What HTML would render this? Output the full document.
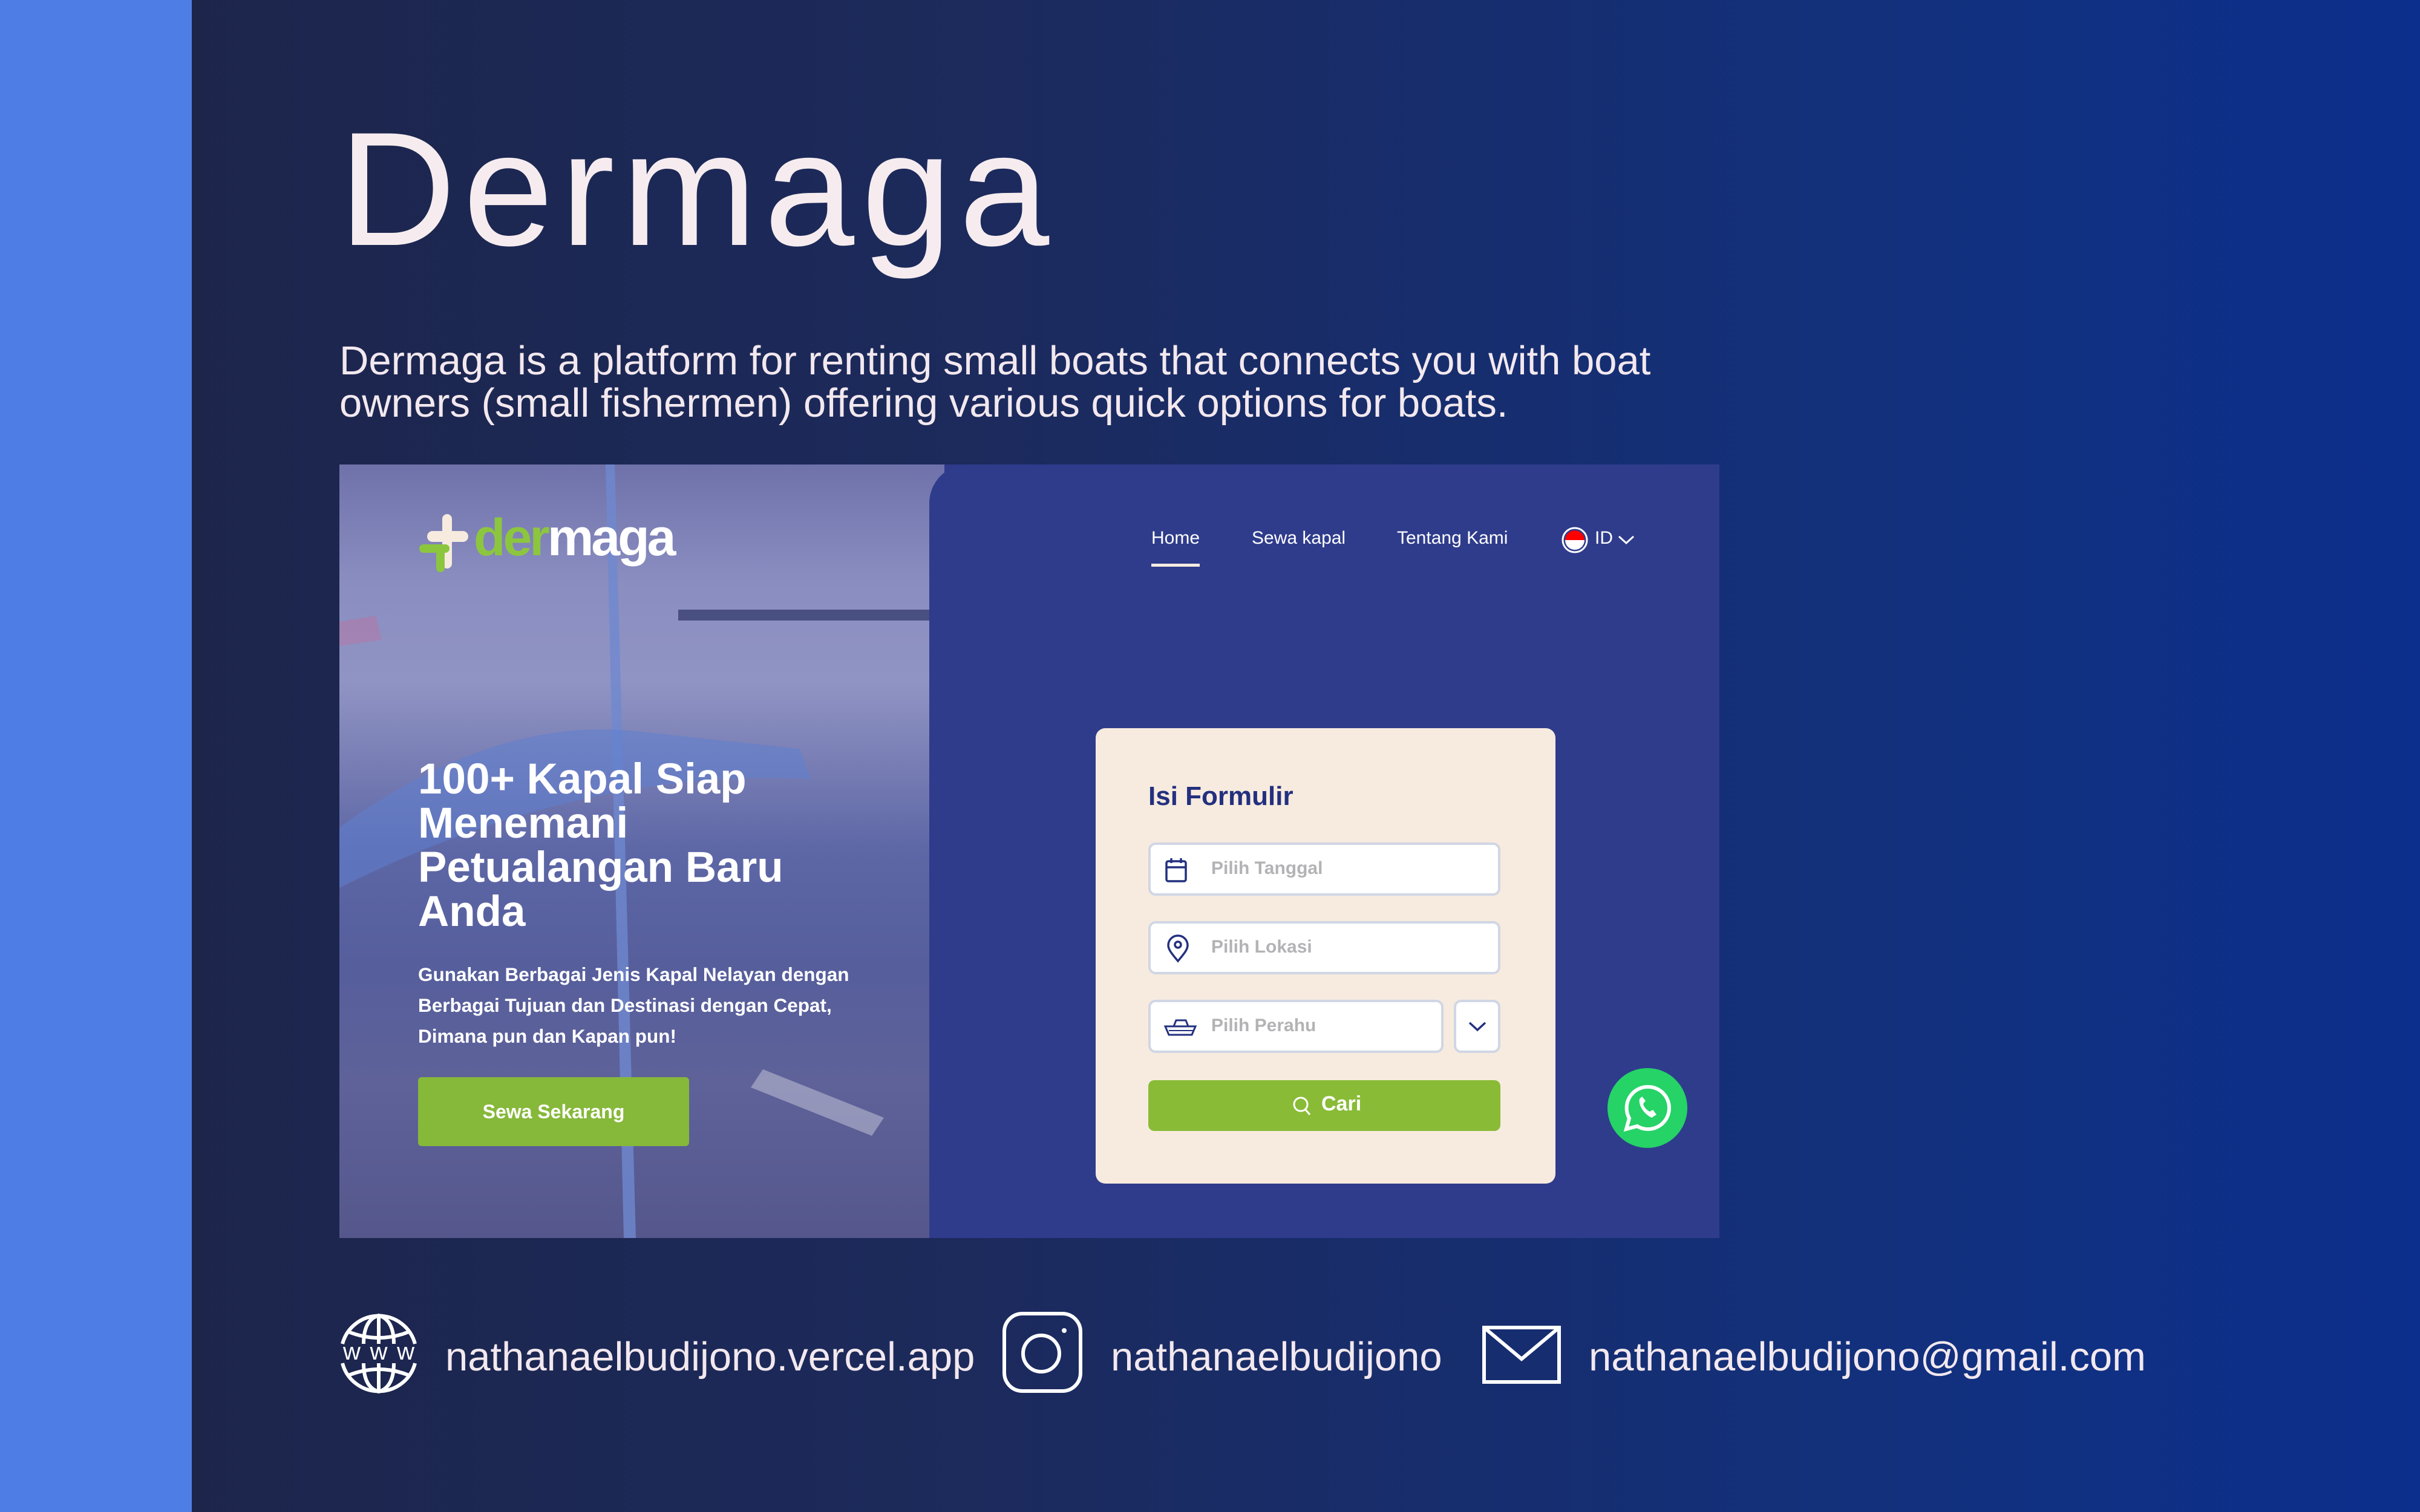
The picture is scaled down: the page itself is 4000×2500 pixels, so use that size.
<!DOCTYPE html>
<html><head><meta charset="utf-8"><style>
*{margin:0;padding:0;box-sizing:border-box}
body{width:4000px;height:2500px;overflow:hidden;position:relative;font-family:"Liberation Sans",sans-serif;background:linear-gradient(90deg,#1d2447 0%,#1c2a5c 40%,#13307a 75%,#0c2f8d 100%)}
.strip{position:absolute;left:0;top:0;width:317px;height:2500px;background:#4f7de6}
.abs{position:absolute;white-space:nowrap}
h1{position:absolute;left:560px;top:178px;font-size:268px;font-weight:400;color:#f6ecef;letter-spacing:12px;line-height:1}
.desc{position:absolute;left:561px;top:562px;font-size:67px;line-height:70px;color:#f2e8ee;white-space:nowrap}
.shot{position:absolute;left:561px;top:768px;width:2281px;height:1279px;overflow:hidden;background:#2f3a8b}
.photo{position:absolute;left:0;top:0;width:1000px;height:1279px;background:linear-gradient(180deg,#6f72aa 0%,#8a8dc0 15%,#9094c4 28%,#7a7fb5 38%,#5d67a6 50%,#565e9c 65%,#5e6299 80%,#55578c 100%)}
.panel{position:absolute;left:975px;top:0;width:1306px;height:1279px;background:#2f3c8c;border-top-left-radius:64px}
.card{position:absolute;left:1250px;top:436px;width:760px;height:753px;background:#f7ebdf;border-radius:16px}
.inp{position:absolute;background:#fff;border:4px solid #d0d6e4;border-radius:12px}
.ph{position:absolute;left:100px;top:22px;font-size:30px;font-weight:bold;color:#b3b3b5}
.nav{position:absolute;top:105px;font-size:30px;color:#fff}
</style></head><body>
<div class="strip"></div>
<h1>Dermaga</h1>
<div class="desc">Dermaga is a platform for renting small boats that connects you with boat<br>owners (small fishermen) offering various quick options for boats.</div>

<div class="shot">
  <div class="photo">
    <svg width="1000" height="1279" style="position:absolute;left:0;top:0">
      <polygon points="440,0 455,0 490,1279 470,1279" fill="#6f88cf" opacity=".8"/>
      <rect x="560" y="240" width="440" height="18" fill="#3a3f72" opacity=".8"/>
      <path d="M0 600 Q250 420 480 440 L760 470 L780 520 Q400 500 0 700 Z" fill="#5f7fd0" opacity=".55"/>
      <path d="M0 260 L60 250 L70 290 L0 300 Z" fill="#b07aa8" opacity=".6"/>
      <path d="M700 1000 L900 1080 L880 1110 L680 1030 Z" fill="#c9c9dc" opacity=".5"/>
    </svg>
    <svg class="abs" style="left:130px;top:80px" width="100" height="100" viewBox="0 0 100 100">
      <rect x="40" y="2" width="16" height="90" rx="8" fill="#f7ebdf"/>
      <rect x="15" y="30" width="68" height="18" rx="9" fill="#f7ebdf"/>
      <rect x="2" y="52" width="50" height="14" rx="7" fill="#8cc63f"/>
      <rect x="30" y="52" width="14" height="46" rx="7" fill="#8cc63f"/>
    </svg>
    <div class="abs" style="left:222px;top:78px;font-size:86px;font-weight:bold;letter-spacing:-4px;line-height:1"><span style="color:#8cc63f">der</span><span style="color:#fff">maga</span></div>
    <div class="abs" style="left:130px;top:484px;font-size:71px;font-weight:bold;color:#fff;line-height:73px">100+ Kapal Siap<br>Menemani<br>Petualangan Baru<br>Anda</div>
    <div class="abs" style="left:130px;top:818px;font-size:31.5px;font-weight:bold;color:#fff;line-height:51px">Gunakan Berbagai Jenis Kapal Nelayan dengan<br>Berbagai Tujuan dan Destinasi dengan Cepat,<br>Dimana pun dan Kapan pun!</div>
    <div class="abs" style="left:130px;top:1013px;width:448px;height:114px;background:#86b83a;border-radius:6px;color:#fff;font-size:32px;font-weight:bold;text-align:center;line-height:114px">Sewa Sekarang</div>
  </div>
  <div class="panel">
    <div class="nav" style="left:367px">Home</div>
    <div class="abs" style="left:367px;top:164px;width:80px;height:5px;background:#f7ebdf"></div>
    <div class="nav" style="left:533px">Sewa kapal</div>
    <div class="nav" style="left:773px">Tentang Kami</div>
    <svg class="abs" style="left:1044px;top:102px" width="46" height="46" viewBox="0 0 46 46"><circle cx="23" cy="23" r="20" fill="none" stroke="#fff" stroke-width="3"/><path d="M7 23 A16 16 0 0 1 39 23 Z" fill="#f00"/><path d="M7 23 A16 16 0 0 0 39 23 Z" fill="#fff"/></svg>
    <div class="nav" style="left:1100px">ID</div>
    <svg class="abs" style="left:1137px;top:115px" width="30" height="20" viewBox="0 0 30 20"><path d="M3 4 L15 15 L27 4" fill="none" stroke="#fff" stroke-width="3"/></svg>
  </div>
  <div class="card">
    <div class="abs" style="left:87px;top:88px;font-size:44px;font-weight:bold;color:#23307f">Isi Formulir</div>
    <div class="inp" style="left:87px;top:189px;width:582px;height:88px">
      <svg class="abs" style="left:22px;top:20px" width="40" height="44" viewBox="0 0 40 44"><rect x="4" y="7" width="32" height="33" rx="3" fill="none" stroke="#23307f" stroke-width="3.5"/><line x1="4" y1="17" x2="36" y2="17" stroke="#23307f" stroke-width="3.5"/><line x1="12" y1="2" x2="12" y2="10" stroke="#23307f" stroke-width="3.5"/><line x1="28" y1="2" x2="28" y2="10" stroke="#23307f" stroke-width="3.5"/></svg>
      <div class="ph">Pilih Tanggal</div>
    </div>
    <div class="inp" style="left:87px;top:319px;width:582px;height:88px">
      <svg class="abs" style="left:25px;top:18px" width="40" height="48" viewBox="0 0 40 48"><path d="M20 44 C8 30 4 24 4 18 A16 16 0 0 1 36 18 C36 24 32 30 20 44 Z" fill="none" stroke="#23307f" stroke-width="3.5"/><circle cx="20" cy="17" r="5" fill="none" stroke="#23307f" stroke-width="3.5"/></svg>
      <div class="ph">Pilih Lokasi</div>
    </div>
    <div class="inp" style="left:87px;top:449px;width:488px;height:88px">
      <svg class="abs" style="left:22px;top:26px" width="56" height="32" viewBox="0 0 56 32"><path d="M2 14 H52 L46 28 H8 Z" fill="none" stroke="#23307f" stroke-width="3"/><path d="M16 14 L20 4 H36 L40 14" fill="none" stroke="#23307f" stroke-width="3"/><line x1="8" y1="21" x2="48" y2="21" stroke="#23307f" stroke-width="2"/></svg>
      <div class="ph">Pilih Perahu</div>
    </div>
    <div class="inp" style="left:592px;top:449px;width:77px;height:88px">
      <svg class="abs" style="left:18px;top:30px" width="34" height="22" viewBox="0 0 34 22"><path d="M4 4 L17 16 L30 4" fill="none" stroke="#23307f" stroke-width="3.5"/></svg>
    </div>
    <div class="abs" style="left:87px;top:582px;width:582px;height:84px;background:#89bb37;border-radius:10px">
      <svg class="abs" style="left:238px;top:26px" width="32" height="34" viewBox="0 0 32 34"><circle cx="14" cy="14" r="11" fill="none" stroke="#fff" stroke-width="3"/><line x1="22" y1="23" x2="29" y2="31" stroke="#fff" stroke-width="3"/></svg>
      <div class="abs" style="left:286px;top:20px;font-size:34px;font-weight:bold;color:#fff">Cari</div>
    </div>
  </div>
  <svg class="abs" style="left:2095px;top:997px" width="134" height="134" viewBox="0 0 134 134"><circle cx="67" cy="67" r="66" fill="#25d366"/><path d="M67 32 A35 35 0 1 1 50 97 L32 102 L37 84 A35 35 0 0 1 67 32 Z" fill="none" stroke="#fff" stroke-width="6"/><path d="M54 52 C52 62 60 76 74 83 L82 78 L76 70 L71 73 C65 70 61 65 60 60 L64 55 L58 48 Z" fill="#fff"/></svg>
</div>

<svg class="abs" style="left:561px;top:2172px" width="130" height="132" viewBox="0 0 130 132" fill="none" stroke="#fff" stroke-width="6">
  <path d="M5 50 A62 62 0 0 1 125 50"/><path d="M5 82 A62 62 0 0 0 125 82"/>
  <path d="M40 50 Q40 10 65 3 Q90 10 90 50"/><path d="M40 82 Q40 122 65 129 Q90 122 90 82"/>
  <line x1="65" y1="3" x2="65" y2="50"/><line x1="65" y1="82" x2="65" y2="129"/>
  <path d="M15 30 Q65 50 115 30"/><path d="M15 102 Q65 82 115 102"/>
  <text x="65" y="76" font-family="Liberation Sans" font-size="40" fill="#fff" stroke="none" text-anchor="middle" textLength="118">www</text>
</svg>
<div class="abs" style="left:736px;top:2205px;font-size:67px;color:#f2e8ee">nathanaelbudijono.vercel.app</div>
<svg class="abs" style="left:1656px;top:2168px" width="134" height="136" viewBox="0 0 134 136" fill="none" stroke="#fff" stroke-width="6"><rect x="4" y="4" width="126" height="128" rx="30"/><circle cx="65" cy="70" r="30"/><circle cx="103" cy="32" r="4" fill="#fff" stroke="none"/></svg>
<div class="abs" style="left:1836px;top:2205px;font-size:67px;color:#f2e8ee">nathanaelbudijono</div>
<svg class="abs" style="left:2450px;top:2192px" width="130" height="96" viewBox="0 0 130 96" fill="none" stroke="#fff" stroke-width="6"><rect x="3" y="3" width="124" height="90"/><path d="M3 3 L65 55 L127 3"/></svg>
<div class="abs" style="left:2626px;top:2205px;font-size:67px;color:#f2e8ee">nathanaelbudijono@gmail.com</div>
</body></html>
